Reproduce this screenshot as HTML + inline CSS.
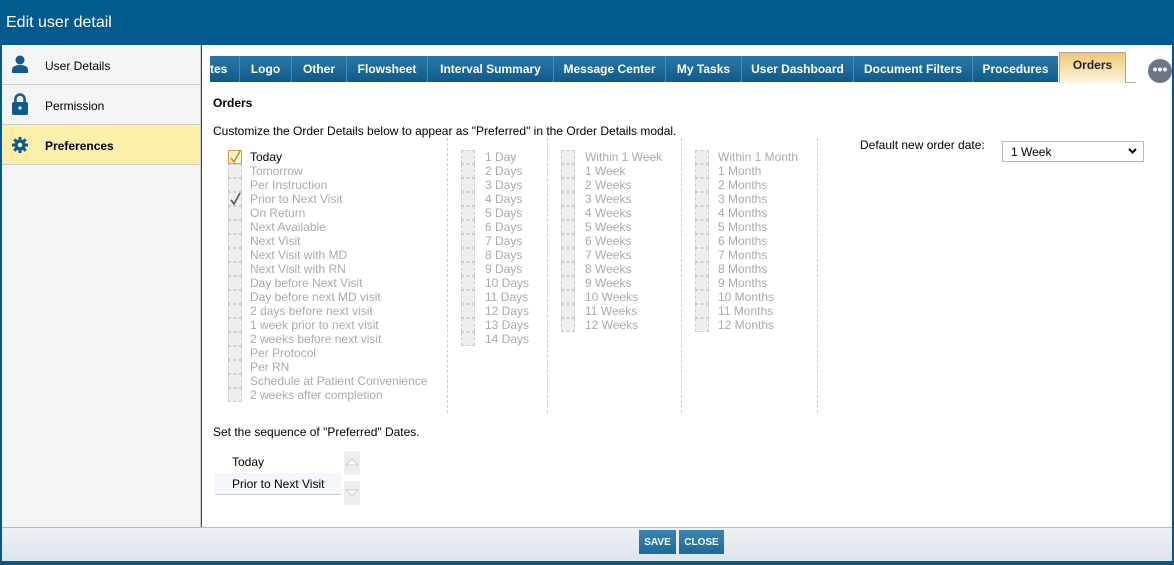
<!DOCTYPE html><html><head><style>
*{box-sizing:border-box;margin:0;padding:0}
body{width:1174px;height:565px;overflow:hidden;background:#005a8e;font-family:"Liberation Sans",Arial,sans-serif;font-size:12px;color:#000;position:relative}
.abs{position:absolute}
#hdr{left:0;top:0;width:1174px;height:45px;color:#fff;font-size:16px;padding:14px 0 0 6px}
#side{left:2px;top:45px;width:199px;height:482px;background:#f4f4f4;border-right:1px solid #ccc}
.si{height:40px;border-bottom:1px solid #ccc;position:relative;padding:14px 0 0 43px;font-size:12px}
.si.on{background:#fdeeaa;font-weight:bold}
#main{left:202px;top:45px;width:970px;height:482px;background:#fff}
.tab{position:absolute;top:11px;height:26px;background:linear-gradient(#2c77a6,#0e5b8c);color:#fff;font-weight:bold;font-size:12px;text-align:center;line-height:26px;border-left:1px solid #4d8ab3;overflow:hidden}
.tab.o{top:7px;height:31px;background:linear-gradient(#f0c873,#fdf5e0);color:#222;line-height:24px;border:1px solid #aaa;border-bottom:none}
.cb{position:absolute;width:14px;height:14px;border:1px dashed #ccc;background:#eee}
.t{position:absolute;color:#aaa;white-space:nowrap;line-height:14px}
.sep{position:absolute;top:93px;height:275px;border-left:1px dashed #ccc}
#foot{left:2px;top:527px;width:1170px;height:34px;background:linear-gradient(#eef1f4,#dde4ea);border-top:1px solid #b0bcc6}
.btn{position:absolute;top:2px;height:24px;background:linear-gradient(#3a86b3,#1c6a9b);color:#fff;font-weight:bold;font-size:10px;text-align:center;line-height:26px}
</style></head><body>
<div id="hdr" class="abs">Edit user detail</div>
<div id="side" class="abs">
<div class="si"><svg class="abs" style="left:10px;top:10px" width="16" height="18" viewBox="0 0 16 18"><circle cx="8" cy="5" r="4.5" fill="#0d5a8c"/><path d="M0 18v-3c0-3 3-5 8-5s8 2 8 5v3z" fill="#0d5a8c"/></svg>User Details</div>
<div class="si"><svg class="abs" style="left:10px;top:8px" width="16" height="22" viewBox="0 0 16 22"><path d="M3.5 9V6a4.5 4.5 0 0 1 9 0v3" stroke="#0d5a8c" stroke-width="2.5" fill="none"/><rect x="0" y="9" width="16" height="13" rx="2" fill="#0d5a8c"/><circle cx="8" cy="15" r="1.6" fill="#fff"/></svg>Permission</div>
<div class="si on"><svg class="abs" style="left:10px;top:12px" width="16" height="16" viewBox="0 0 16 16"><g fill="#0d5a8c"><circle cx="8" cy="8" r="5.5"/><rect x="6.5" y="0" width="3" height="16"/><rect x="0" y="6.5" width="16" height="3"/><rect x="6.5" y="0" width="3" height="16" transform="rotate(45 8 8)"/><rect x="6.5" y="0" width="3" height="16" transform="rotate(-45 8 8)"/></g><circle cx="8" cy="8" r="2.3" fill="#fdeeaa"/></svg>Preferences</div>
</div>
<div id="main" class="abs">
<div class="tab" style="left:8px;width:29px;border-left:none;text-align:left;padding-left:0">tes</div>
<div class="tab" style="left:37px;width:52px">Logo</div>
<div class="tab" style="left:89px;width:55px">Other</div>
<div class="tab" style="left:144px;width:81px">Flowsheet</div>
<div class="tab" style="left:225px;width:126px">Interval Summary</div>
<div class="tab" style="left:351px;width:112px">Message Center</div>
<div class="tab" style="left:463px;width:76px">My Tasks</div>
<div class="tab" style="left:539px;width:112px">User Dashboard</div>
<div class="tab" style="left:651px;width:119px">Document Filters</div>
<div class="tab" style="left:770px;width:86px">Procedures</div>
<div class="tab o" style="left:857px;width:67px">Orders</div>
<div class="abs" style="left:924px;top:37px;width:10px;border-top:1px solid #aaa"></div>
<div class="abs" style="left:946px;top:14px;width:24px;height:24px;border-radius:50%;background:#6b7785;color:#fff;font-weight:bold;text-align:center;line-height:20px;font-size:14px">•••</div>
<div class="abs" style="left:11px;top:51px;font-weight:bold">Orders</div>
<div class="abs" style="left:11px;top:79px">Customize the Order Details below to appear as "Preferred" in the Order Details modal.</div>
<div class="sep" style="left:245px"></div><div class="sep" style="left:345px"></div><div class="sep" style="left:479px"></div><div class="sep" style="left:615px"></div>
<div class="abs" style="left:658px;top:93px">Default new order date:</div>
<div class="abs" style="left:800px;top:96px;width:142px;height:21px;border:1px solid #bbb;padding:3px 0 0 8px">1 Week<svg class="abs" style="right:6px;top:6px" width="9" height="6" viewBox="0 0 9 6"><path d="M1 1l3.5 3.5L8 1" stroke="#000" stroke-width="2" fill="none"/></svg></div>
<div id="cols"></div>
<div class="abs" style="left:11px;top:380px">Set the sequence of "Preferred" Dates.</div>
<div class="abs" style="left:30px;top:410px">Today</div>
<div class="abs" style="left:13px;top:428px;width:126px;height:22px;background:#f3f6fb;border-bottom:1px solid #ccc;padding:4px 0 0 17px">Prior to Next Visit</div>
<div class="abs" style="left:142px;top:406px;width:16px;height:24px;background:#eee;border-radius:2px"><svg width="16" height="24"><path d="M2 14l6-6 6 6z" fill="#fff" stroke="#ccc"/></svg></div>
<div class="abs" style="left:142px;top:436px;width:16px;height:24px;background:#eee;border-radius:2px"><svg width="16" height="24"><path d="M2 9l6 6 6-6z" fill="#fff" stroke="#ccc"/></svg></div>
</div>
<div id="foot" class="abs"><div class="btn" style="left:637px;width:37px">SAVE</div><div class="btn" style="left:677px;width:45px">CLOSE</div></div>
<script>
var c=document.getElementById('cols'),h='';
function col(bx,tx,items){items.forEach(function(s,i){var y=105+i*14;h+='<div class="cb" style="left:'+bx+'px;top:'+y+'px"></div><div class="t" style="left:'+tx+'px;top:'+y+'px">'+s+'</div>';});}
col(26,48,["Today","Tomorrow","Per Instruction","Prior to Next Visit","On Return","Next Available","Next Visit","Next Visit with MD","Next Visit with RN","Day before Next Visit","Day before next MD visit","2 days before next visit","1 week prior to next visit","2 weeks before next visit","Per Protocol","Per RN","Schedule at Patient Convenience","2 weeks after completion"]);
var d=[];for(var i=1;i<=14;i++)d.push(i+(i==1?" Day":" Days"));col(259,283,d);
var w=["Within 1 Week"];for(i=1;i<=12;i++)w.push(i+(i==1?" Week":" Weeks"));col(359,383,w);
var m=["Within 1 Month"];for(i=1;i<=12;i++)m.push(i+(i==1?" Month":" Months"));col(493,516,m);
c.innerHTML=h;
var t=c.children;t[1].style.color='#000';
t[0].style.cssText+=';border:1px solid #e0a030;background:#fff4d8';t[0].innerHTML='<svg width="14" height="14" style="position:absolute;left:-1px;top:-1px"><path d="M3 8l3 4 6-11" stroke="#d09000" stroke-width="1.6" fill="none"/></svg>';
t[6].innerHTML='<svg width="14" height="14" style="position:absolute;left:-1px;top:-1px"><path d="M3 8l3 4 6-11" stroke="#555" stroke-width="1.6" fill="none"/></svg>';
</script>
</body></html>
